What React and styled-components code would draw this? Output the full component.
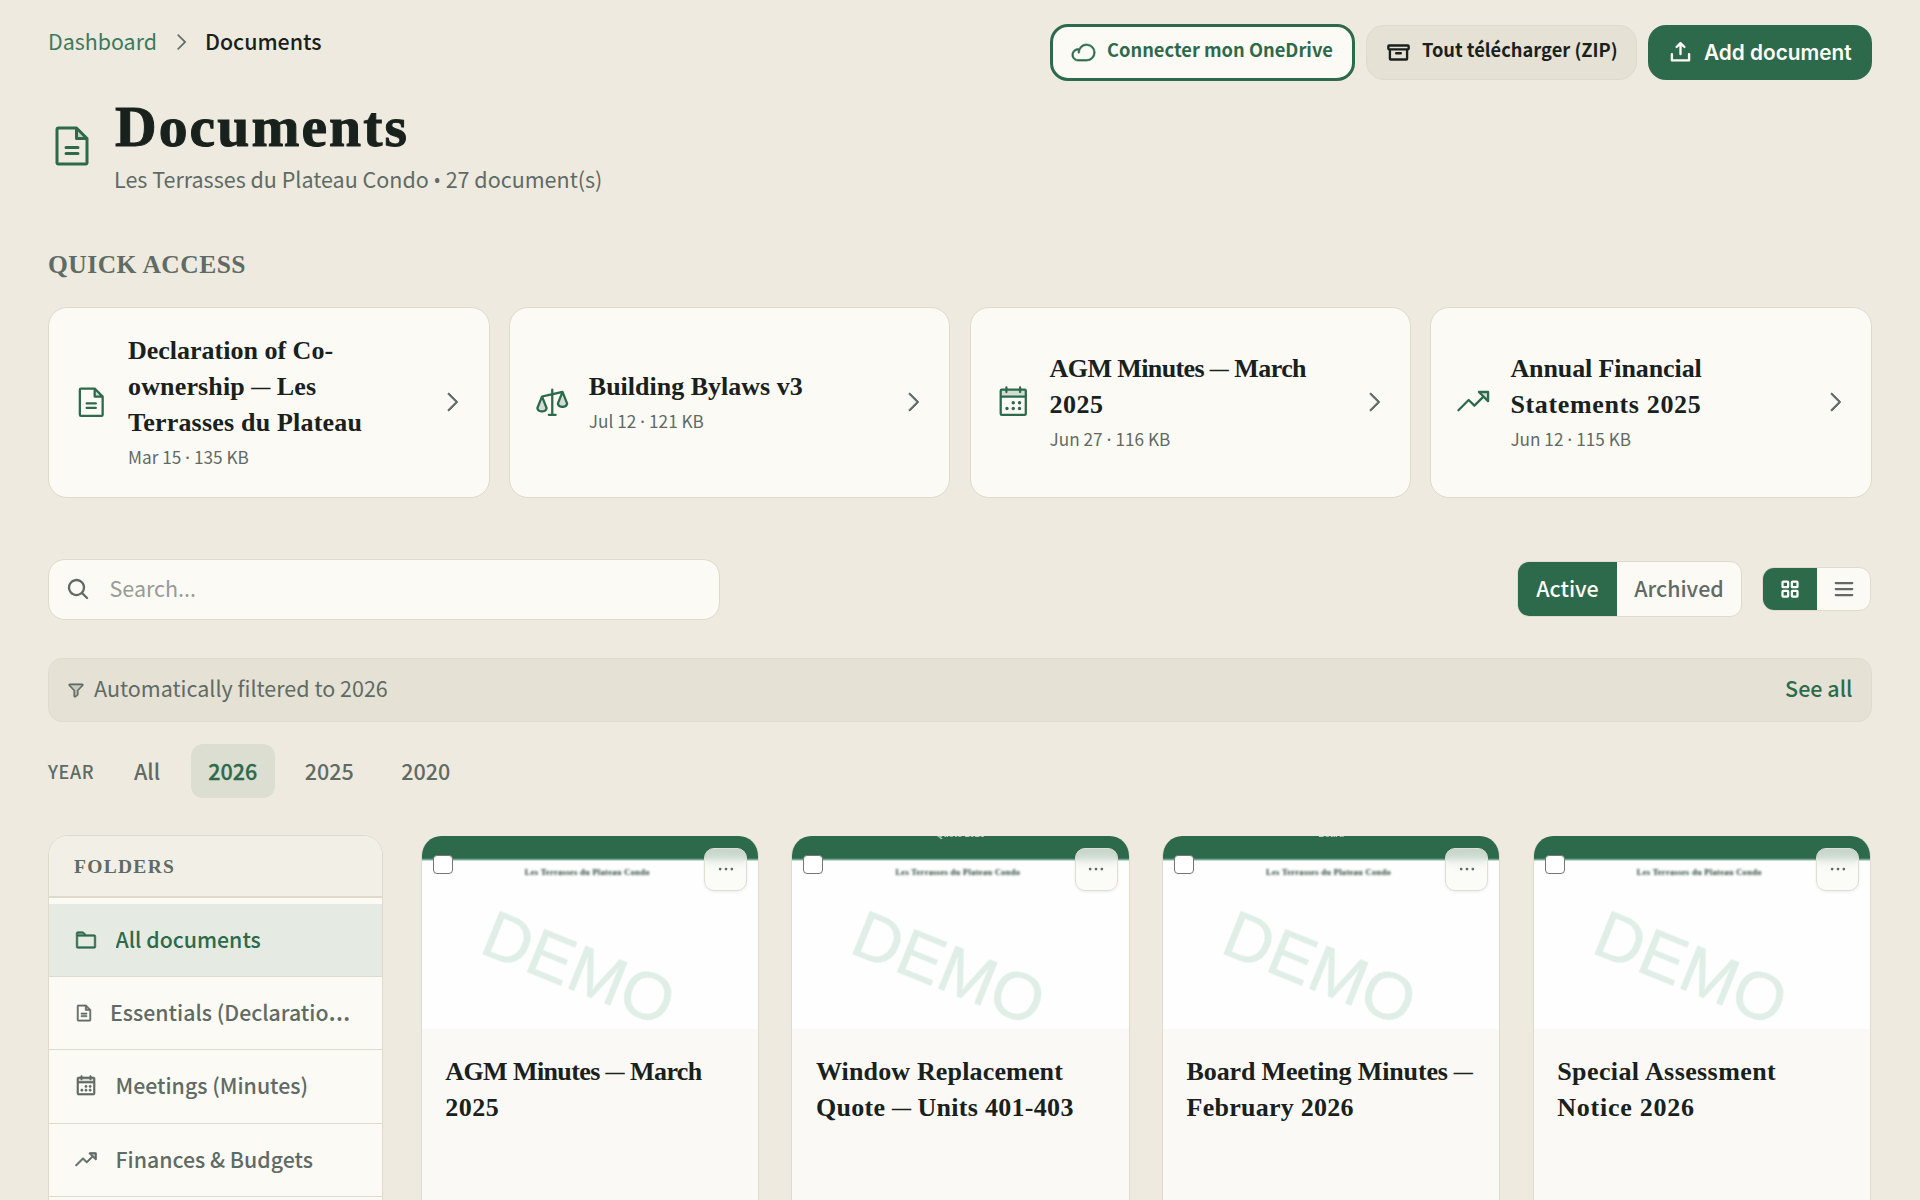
import React from 'react';
import styled, { createGlobalStyle, css } from 'styled-components';
import {
  PiFileTextDuotone, PiScalesDuotone, PiCalendarDotsDuotone, PiTrendUpDuotone, PiCaretRight,
  PiCloud, PiArchiveBold, PiUploadSimpleBold, PiMagnifyingGlassBold, PiFunnelDuotone,
  PiSquaresFourBold, PiListBold, PiFolderDuotone, PiDotsThreeBold,
} from 'react-icons/pi';

const c = {
  bg: '#eeeadf', card: '#fcfaf5', green: '#2d6a4b', ink: '#19211d', muted: '#5f6b64',
  line: '#e0dacd', sand: '#e5e1d5',
};
const sans = "'Noto Sans CJK SC', 'Noto Sans', sans-serif";
const serif = "'Liberation Serif', serif";

const Global = createGlobalStyle`
  * { box-sizing: border-box; }
  html, body { margin: 0; background: ${c.bg}; }
  body { font-family: ${sans}; color: ${c.ink}; overflow: hidden; }
  h1, h2, h3, p { margin: 0; }
  button { font: inherit; margin: 0; cursor: pointer; }
  svg { display: block; flex-shrink: 0; }
`;

const Page = styled.main`
  height: 1200px;
  overflow: hidden;
  padding: 24px 48px 0;
  display: flex;
  flex-direction: column;
  > * { flex-shrink: 0; }
`;

const Header = styled.header`
  display: flex;
  justify-content: space-between;
  align-items: flex-start;
  height: 225.5px;
`;

const Crumbs = styled.nav`
  display: flex;
  align-items: center;
  height: 34px;
  font-size: 21.4px;
  line-height: 33px;
  svg { margin: 1px 13px 0 13px; color: ${c.muted}; stroke: currentColor; stroke-width: 6px; }
`;

const Crumb = styled.span`
  color: ${(p) => (p.$current ? c.ink : '#3c7a5c')};
  font-weight: ${(p) => (p.$current ? 500 : 400)};
  padding-bottom: 2px;
`;

const TitleRow = styled.div`
  display: flex;
  align-items: center;
  gap: 18px;
  margin-top: 36px;
  color: ${c.green};
  svg { margin-top: 1px; }
`;

const Title = styled.h1`
  font: 700 57.6px/66px ${serif};
  letter-spacing: 2.1px;
  -webkit-text-stroke: 1px ${c.ink};
  color: ${c.ink};
  padding-left: 1px;
`;

const Subtitle = styled.p`
  font-size: 21.5px;
  line-height: 37px;
  color: ${c.muted};
`;

const Dot = styled.span`
  font-family: 'Noto Sans', sans-serif;
  font-size: ${(p) => (p.$wide ? 1.1 : 0.9)}em;
  line-height: 1;
`;

const Actions = styled.div`
  display: flex;
  align-items: center;
  gap: 11px;
  height: 57px;
`;

const variants = {
  outline: css`
    height: 57px; width: 305px; background: ${c.card}; color: ${c.green};
    border: 3px solid ${c.green}; padding: 0 0 0 18px;
    svg { stroke: currentColor; stroke-width: 6px; }
  `,
  soft: css`
    height: 55px; width: 271px; background: ${c.sand}; color: ${c.ink};
    border: 1px solid ${c.line}; padding: 0 0 0 19px;
  `,
  solid: css`
    height: 55px; width: 224px; background: ${c.green}; color: #fdfcf8;
    border: 0; padding: 0 0 0 20px;
  `,
};

const ActionButton = styled.button`
  display: flex;
  align-items: center;
  gap: 11px;
  border-radius: 18px;
  white-space: nowrap;
  line-height: 28px;
  font-weight: 600;
  ${(p) => variants[p.$variant]}
`;

const ActionLabel = styled.span`
  font-family: ${(p) => (p.$inter ? 'Inter, sans-serif' : sans)};
  font-size: ${(p) => (p.$inter ? '20.8px' : '18.3px')};
  padding-bottom: ${(p) => (p.$inter ? 0 : 7)}px;
`;

const SectionTitle = styled.h2`
  font: 700 25.5px/30px ${serif};
  letter-spacing: 0.5px;
  color: ${c.muted};
`;

const QuickGrid = styled.section`
  display: grid;
  grid-template-columns: repeat(4, 1fr);
  gap: 19.2px;
  margin-top: 27px;
`;

const QuickCard = styled.article`
  height: 191px;
  display: flex;
  align-items: center;
  gap: 18.5px;
  padding: 0 23.5px 0 24px;
  background: ${c.card};
  border: 1.2px solid ${c.line};
  border-radius: 19px;
  color: ${c.green};
  > svg:last-child { color: ${c.muted}; stroke: currentColor; stroke-width: 8px; }
`;

const QuickText = styled.div`
  flex: 1;
  min-width: 0;
`;

const CardTitle = styled.h3`
  font: 700 26px/36px ${serif};
  color: ${c.ink};
`;

const TitleLine = styled.span`
  display: block;
  white-space: nowrap;
  letter-spacing: ${(p) => p.$track || 0}px;
`;

const Dash = styled.span`
  font-size: 18.5px;
  font-weight: 400;
  line-height: 1;
  vertical-align: 2px;
  letter-spacing: 0;
  -webkit-text-stroke: 0.6px currentColor;
`;

const Meta = styled.p`
  font-size: 17.2px;
  line-height: 30px;
  margin-top: 1px;
  color: ${c.muted};
`;

const Toolbar = styled.div`
  display: flex;
  align-items: center;
  margin-top: 61px;
  padding-right: 1px;
`;

const SearchBox = styled.div`
  width: 671.5px;
  height: 61px;
  display: flex;
  align-items: center;
  gap: 19.5px;
  padding-left: 17px;
  background: ${c.card};
  border: 1.2px solid ${c.line};
  border-radius: 17px;
  font-size: 21.5px;
  color: #999b96;
  margin-right: auto;
  svg { color: ${c.muted}; }
  span { padding-bottom: 2px; line-height: 32px; }
`;

const Segmented = styled.div`
  display: flex;
  height: ${(p) => p.$h}px;
  border: 1.2px solid ${c.line};
  border-radius: 12px;
  overflow: hidden;
  background: ${c.card};
  margin-left: 20px;
`;

const Segment = styled.button`
  display: flex;
  align-items: center;
  justify-content: center;
  width: ${(p) => p.$w}px;
  border: 0;
  padding: 0;
  font-size: 21.4px;
  font-weight: 500;
  line-height: 30px;
  background: ${(p) => (p.$on ? c.green : 'transparent')};
  color: ${(p) => (p.$on ? '#fdfcf8' : c.muted)};
  span { padding-bottom: 2px; }
`;

const FilterBar = styled.div`
  display: flex;
  align-items: center;
  height: 64px;
  margin-top: 38px;
  padding: 0 18.5px 3px 18.5px;
  gap: 9px;
  background: ${c.sand};
  border: 1px solid #e1dccf;
  border-radius: 14px;
  font-size: 21.5px;
  line-height: 32px;
  color: ${c.muted};
  svg { margin-top: 3px; margin-left: -0.5px; stroke: currentColor; stroke-width: 8px; }
`;

const SeeAll = styled.a`
  margin-left: auto;
  color: ${c.green};
  font-weight: 500;
`;

const YearRow = styled.div`
  display: flex;
  align-items: center;
  gap: 12.6px;
  margin-top: 22.5px;
  height: 54px;
`;

const YearLabel = styled.span`
  width: 55.5px;
  font-size: 18px;
  font-weight: 500;
  letter-spacing: 0.6px;
  color: ${c.muted};
`;

const YearPill = styled.button`
  width: ${(p) => p.$w || 84}px;
  height: 54px;
  padding: 0 0 2px;
  border: 0;
  border-radius: 12px;
  font-size: 21.5px;
  font-weight: 500;
  color: ${(p) => (p.$on ? c.green : c.muted)};
  background: ${(p) => (p.$on ? '#dcded1' : 'transparent')};
  -webkit-text-stroke: ${(p) => (p.$on ? '0.3px currentColor' : '0')};
`;

const Content = styled.div`
  display: flex;
  gap: 37.8px;
  margin-top: 37px;
  padding-right: 1px;
`;

const Sidebar = styled.aside`
  width: 335px;
  height: 400px;
  flex-shrink: 0;
  background: ${c.card};
  border: 1.2px solid ${c.line};
  border-radius: 20px 20px 0 0;
  overflow: hidden;
`;

const SidebarHead = styled.h3`
  height: 61.5px;
  padding: 17px 0 0 25px;
  font: 700 19.5px/28px ${serif};
  letter-spacing: 1.3px;
  color: ${c.muted};
  background: #f2efe7;
  border-bottom: 2px solid ${c.line};
  margin-bottom: 6px;
`;

const Folder = styled.div`
  height: 73.4px;
  display: flex;
  align-items: center;
  gap: ${(p) => p.$gap || 18}px;
  padding: 0 26px 0 24.5px;
  border-bottom: 1.2px solid ${c.line};
  color: ${(p) => (p.$on ? c.green : c.muted)};
  background: ${(p) => (p.$on ? '#e5eae3' : 'transparent')};
  svg { stroke: currentColor; stroke-width: 7px; }
`;

const FolderName = styled.span`
  overflow: hidden;
  white-space: nowrap;
  text-overflow: ellipsis;
  font: 500 27px/32px 'Noto Sans', sans-serif;
  padding-bottom: 3px;
  span { font: 500 21.3px/32px ${sans}; }
`;

const DocGrid = styled.section`
  flex: 1;
  display: grid;
  grid-template-columns: repeat(4, 1fr);
  gap: 32.4px;
`;

const DocCard = styled.article`
  height: 400px;
  background: #fbf9f5;
  border: 1px solid ${c.line};
  border-top: 0;
  border-radius: 20px 20px 0 0;
  overflow: hidden;
  margin-top: 0.5px;
`;

const Thumb = styled.div`
  position: relative;
  height: 193px;
  overflow: hidden;
  background: linear-gradient(${c.green} 0 22px, #8fb8a2 24px, #fefefe 25px);
`;

const ThumbHeading = styled.span`
  position: absolute;
  left: 50%;
  top: -8px;
  transform: translateX(-50%);
  font: 700 9px/12px 'Liberation Sans', sans-serif;
  color: #b7d0c2;
  filter: blur(0.6px);
  white-space: nowrap;
`;

const ThumbName = styled.span`
  position: absolute;
  left: 103px;
  top: 31px;
  font: 700 8.4px/11px 'Liberation Serif', serif;
  letter-spacing: 0.35px;
  color: #1d3b2c;
  filter: blur(0.9px);
  white-space: nowrap;
`;

const Watermark = styled.span`
  position: absolute;
  left: 157px;
  top: 132.5px;
  transform: translate(-50%, -50%) rotate(22deg);
  font: 400 66.6px/76px 'Liberation Sans', sans-serif;
  color: #dfeee6;
  -webkit-text-stroke: 0.6px #dfeee6;
  filter: blur(0.7px);
`;

const Check = styled.input`
  appearance: none;
  position: absolute;
  left: 11px;
  top: 19px;
  width: 20px;
  height: 19px;
  margin: 0;
  background: #fff;
  border: 1.3px solid #767676;
  border-radius: 4px;
`;

const MoreButton = styled.button`
  position: absolute;
  right: 11px;
  top: 12px;
  width: 43px;
  height: 43px;
  padding: 0 0 1px;
  display: flex;
  align-items: center;
  justify-content: center;
  border: 1px solid #e0ddd3;
  border-radius: 10px;
  background: rgba(250, 249, 245, 0.75);
  backdrop-filter: blur(5px);
  box-shadow: 0 1px 3px rgba(0, 0, 0, 0.08);
  color: ${c.muted};
`;

const DocBody = styled.div`
  padding: 25px 18px 0 23.5px;
`;

const quick = [
  {
    Icon: PiFileTextDuotone,
    lines: [['Declaration of Co-', 0], ['ownership — Les', 0.15], ['Terrasses du Plateau', 0.2]],
    meta: ['Mar 15', '135 KB'],
  },
  { Icon: PiScalesDuotone, lines: [['Building Bylaws v3', 0]], meta: ['Jul 12', '121 KB'] },
  { Icon: PiCalendarDotsDuotone, lines: [['AGM Minutes — March', -0.6], ['2025', 0.5]], meta: ['Jun 27', '116 KB'] },
  { Icon: PiTrendUpDuotone, lines: [['Annual Financial', -0.1], ['Statements 2025', 0.65]], meta: ['Jun 12', '115 KB'] },
];

const folders = [
  { Icon: PiFolderDuotone, name: 'All documents', on: true },
  { Icon: PiFileTextDuotone, name: 'Essentials (Declaration, Bylaws)', size: 20, gap: 16.5 },
  { Icon: PiCalendarDotsDuotone, name: 'Meetings (Minutes)' },
  { Icon: PiTrendUpDuotone, name: 'Finances & Budgets' },
];

const docs = [
  { lines: [['AGM Minutes — March', -0.6], ['2025', 0.5]] },
  { lines: [['Window Replacement', 0.15], ['Quote — Units 401-403', 0.3]], heading: 'Quote 2026' },
  { lines: [['Board Meeting Minutes —', -0.15], ['February 2026', 0.25]], heading: 'Board' },
  { lines: [['Special Assessment', 0.4], ['Notice 2026', 0.75]] },
];

function Lines({ lines }) {
  return (
    <CardTitle>
      {lines.map(([text, track]) => {
        const [before, after] = text.split('—');
        return (
          <TitleLine key={text} $track={track}>
            {before}
            {after !== undefined && <Dash>—</Dash>}
            {after}
          </TitleLine>
        );
      })}
    </CardTitle>
  );
}

export default function App() {
  return (
    <Page>
      <Global />
      <Header>
        <div>
          <Crumbs>
            <Crumb>Dashboard</Crumb>
            <PiCaretRight size={22} />
            <Crumb $current>Documents</Crumb>
          </Crumbs>
          <TitleRow>
            <PiFileTextDuotone size={48} />
            <div>
              <Title>Documents</Title>
              <Subtitle>Les Terrasses du Plateau Condo <Dot>•</Dot> 27 document(s)</Subtitle>
            </div>
          </TitleRow>
        </div>
        <Actions>
          <ActionButton $variant="outline"><PiCloud size={25} /><ActionLabel>Connecter mon OneDrive</ActionLabel></ActionButton>
          <ActionButton $variant="soft"><PiArchiveBold size={25} /><ActionLabel>Tout télécharger (ZIP)</ActionLabel></ActionButton>
          <ActionButton $variant="solid"><PiUploadSimpleBold size={25} /><ActionLabel $inter>Add document</ActionLabel></ActionButton>
        </Actions>
      </Header>

      <SectionTitle>QUICK ACCESS</SectionTitle>
      <QuickGrid>
        {quick.map(({ Icon, lines, meta }) => (
          <QuickCard key={lines[0][0]}>
            <Icon size={36.5} />
            <QuickText>
              <Lines lines={lines} />
              <Meta>{meta[0]} <Dot $wide>·</Dot> {meta[1]}</Meta>
            </QuickText>
            <PiCaretRight size={26} />
          </QuickCard>
        ))}
      </QuickGrid>

      <Toolbar>
        <SearchBox><PiMagnifyingGlassBold size={24} /><span>Search...</span></SearchBox>
        <Segmented $h={56}>
          <Segment $on $w={99}><span>Active</span></Segment>
          <Segment $w={124}><span>Archived</span></Segment>
        </Segmented>
        <Segmented $h={44}>
          <Segment $on $w={54}><PiSquaresFourBold size={24} /></Segment>
          <Segment $w={53}><PiListBold size={24} /></Segment>
        </Segmented>
      </Toolbar>

      <FilterBar>
        <PiFunnelDuotone size={18} />
        Automatically filtered to 2026
        <SeeAll>See all</SeeAll>
      </FilterBar>

      <YearRow>
        <YearLabel>YEAR</YearLabel>
        <YearPill $w={62}>All</YearPill>
        <YearPill $on>2026</YearPill>
        <YearPill>2025</YearPill>
        <YearPill>2020</YearPill>
      </YearRow>

      <Content>
        <Sidebar>
          <SidebarHead>FOLDERS</SidebarHead>
          {folders.map(({ Icon, name, on, size, gap }) => (
            <Folder key={name} $on={on} $gap={gap}>
              <Icon size={size || 24} />
              <FolderName><span>{name}</span></FolderName>
            </Folder>
          ))}
        </Sidebar>
        <DocGrid>
          {docs.map(({ lines, heading }) => (
            <DocCard key={lines[0][0]}>
              <Thumb>
                {heading && <ThumbHeading>{heading}</ThumbHeading>}
                <ThumbName>Les Terrasses du Plateau Condo</ThumbName>
                <Watermark>DEMO</Watermark>
                <Check type="checkbox" />
                <MoreButton><PiDotsThreeBold size={22} /></MoreButton>
              </Thumb>
              <DocBody><Lines lines={lines} /></DocBody>
            </DocCard>
          ))}
        </DocGrid>
      </Content>
    </Page>
  );
}
